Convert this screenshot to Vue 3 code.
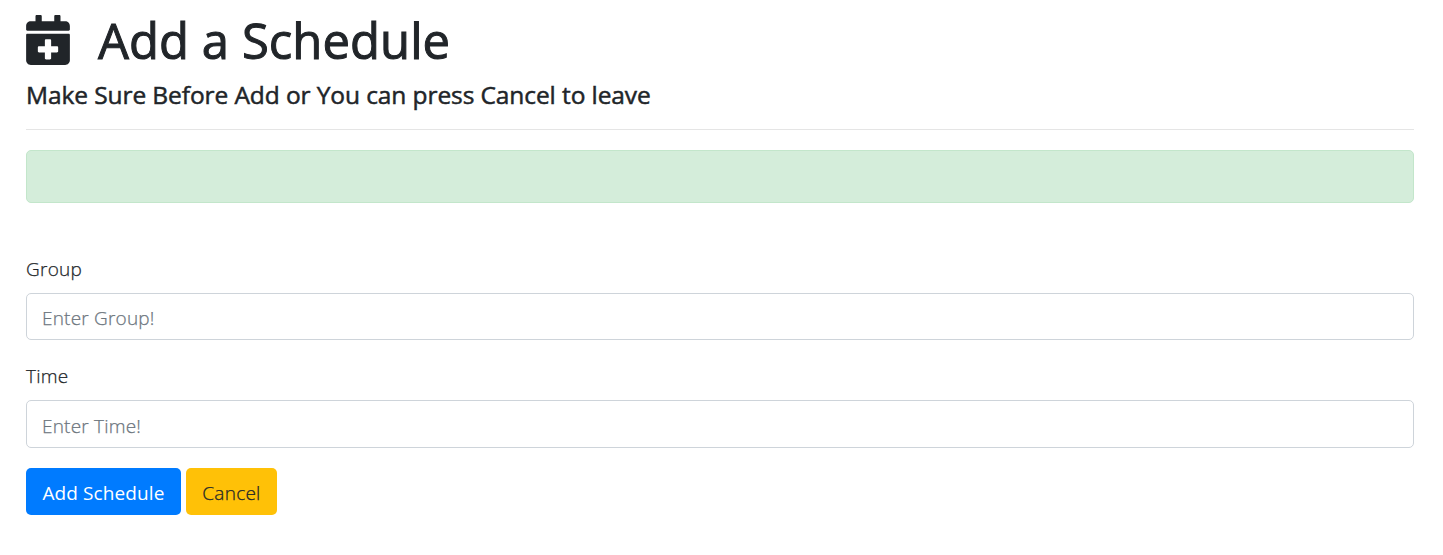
<script setup>
import { ref } from 'vue'

const group = ref('')
const time = ref('')
</script>

<template>
  <main class="page">
    <h1 class="title">
      <svg class="icon" viewBox="0 0 448 512" aria-hidden="true">
        <path fill="currentColor" d="M436 160H12c-6.600 0-12-5.400-12-12v-36c0-26.500 21.500-48 48-48h48V12c0-6.600 5.400-12 12-12h40c6.600 0 12 5.400 12 12v52h128V12c0-6.600 5.400-12 12-12h40c6.600 0 12 5.400 12 12v52h48c26.500 0 48 21.500 48 48v36c0 6.600-5.400 12-12 12zM12 192h424c6.600 0 12 5.400 12 12v260c0 26.500-21.500 48-48 48H48c-26.500 0-48-21.500-48-48V204c0-6.600 5.400-12 12-12zm316 140c0-6.600-5.400-12-12-12h-60v-60c0-6.600-5.400-12-12-12h-40c-6.600 0-12 5.400-12 12v60h-60c-6.600 0-12 5.400-12 12v40c0 6.600 5.400 12 12 12h60v60c0 6.600 5.400 12 12 12h40c6.600 0 12-5.400 12-12v-60h60c6.600 0 12-5.400 12-12z" />
      </svg>
      <span class="title-text">Add a Schedule</span>
    </h1>
    <h4 class="subtitle">Make Sure Before Add or You can press Cancel to leave</h4>
    <hr class="rule" />
    <div class="alert"></div>
    <form class="form" @submit.prevent>
      <label class="label" for="group">Group</label>
      <input id="group" v-model="group" class="control first" type="text" placeholder="Enter Group!" />
      <label class="label" for="time">Time</label>
      <input id="time" v-model="time" class="control second" type="text" placeholder="Enter Time!" />
      <div class="actions">
        <button class="btn primary" type="submit">Add Schedule</button>
        <button class="btn warning" type="button">Cancel</button>
      </div>
    </form>
  </main>
</template>

<style>
body {
  margin: 0;
  background: #fff;
}
</style>

<style scoped>
.page {
  box-sizing: border-box;
  padding: 11px 29px 0 26px;
  font-family: "Segoe UI", "Open Sans", "Noto Sans", sans-serif;
  font-size: 19px;
  color: #212529;
}
.title {
  display: flex;
  align-items: center;
  height: 60px;
  margin: 0;
  font-size: 49px;
  line-height: 58px;
  font-weight: 500;
  letter-spacing: 0.05px;
  white-space: nowrap;
  -webkit-text-stroke: 1px currentColor;
}
.title-text {
  margin-top: -2px;
}
.icon {
  width: 44px;
  height: 50px;
  margin: -2px 28px 0 0;
}
.subtitle {
  height: 30px;
  margin: 9px 0 0;
  font-size: 24.5px;
  line-height: 30px;
  font-weight: 500;
  letter-spacing: -0.09px;
  white-space: nowrap;
  -webkit-text-stroke: 0.5px currentColor;
}
.rule {
  height: 1px;
  margin: 19px 0 20px;
  border: 0;
  background: #e5e5e5;
}
.alert {
  box-sizing: border-box;
  height: 53px;
  border: 1px solid #c3e6cb;
  border-radius: 5px;
  background: #d4edda;
}
.form {
  display: flex;
  flex-direction: column;
  padding-top: 51px;
}
.label {
  height: 30px;
  margin-bottom: 9px;
  line-height: 30px;
  font-weight: 300;
  letter-spacing: 0.25px;
  -webkit-text-stroke: 0.25px currentColor;
}
.control {
  box-sizing: border-box;
  width: 100%;
  padding: 2px 15px 0;
  border: 1px solid #ced4da;
  border-radius: 5px;
  background: #fff;
  font: inherit;
  font-weight: 300;
  letter-spacing: 0.2px;
  color: #495057;
  outline: 0;
}
.control::placeholder {
  color: #6c757d;
  opacity: 1;
  -webkit-text-stroke: 0.25px #6c757d;
}
.first {
  height: 47px;
  margin-bottom: 21px;
}
.second {
  height: 48px;
  margin-bottom: 20px;
  padding-top: 3px;
}
.actions {
  display: flex;
  gap: 5px;
}
.btn {
  height: 47px;
  padding: 2px 0 0;
  border: 0;
  border-radius: 5px;
  font: inherit;
  letter-spacing: 0.1px;
  white-space: nowrap;
}
.primary {
  width: 155px;
  background: #007bff;
  color: #fff;
}
.warning {
  width: 91px;
  background: #ffc107;
  color: #212529;
  font-weight: 300;
  letter-spacing: 0.25px;
  -webkit-text-stroke: 0.25px currentColor;
}
</style>
